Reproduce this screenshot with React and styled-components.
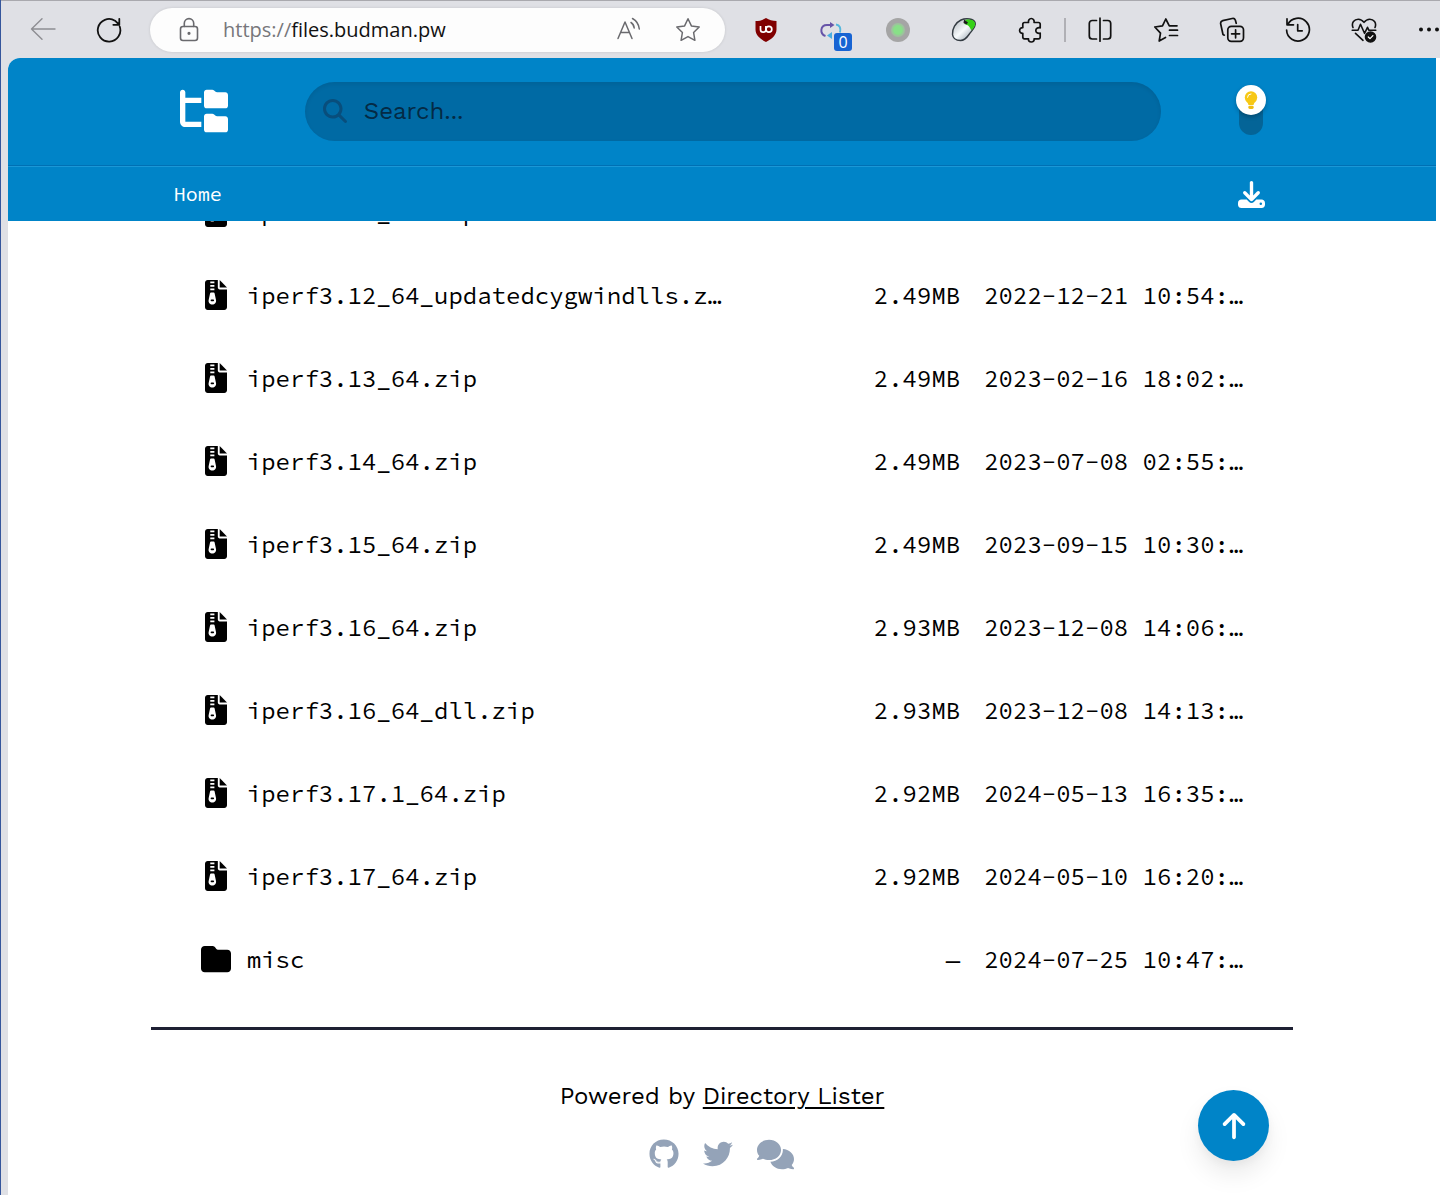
import React, { useState } from "react";
import styled, { createGlobalStyle } from "styled-components";
import {
  FaFolderTree,
  FaMagnifyingGlass,
  FaDownload,
  FaFolder,
  FaGithub,
  FaTwitter,
  FaComments,
  FaArrowUp,
} from "react-icons/fa6";

const sans = `"Work Sans", Inter, "Liberation Sans", sans-serif`;
const mono = `"Source Code Pro", "Liberation Mono", monospace`;
const blue = "#0084c8";
const deepBlue = "#006aa4";

const GlobalStyle = createGlobalStyle`
  *, *::before, *::after { box-sizing: border-box; }
  body { margin: 0; background: #dfe0e5; color: #000; font-family: ${sans}; }
  button, input { font: inherit; color: inherit; }
  button { border: 0; padding: 0; background: none; cursor: pointer; }
  a { color: inherit; text-decoration: none; }
  svg { display: block; flex: none; }
`;

/* ---------- browser window ---------- */

const Window = styled.div`
  display: flex;
  flex-direction: column;
  min-height: 100vh;
  border-left: 1px solid #35569c;
  background: #dfe0e5;
  overflow: hidden;
`;

const Toolbar = styled.div`
  display: flex;
  align-items: center;
  height: 58px;
  padding-left: 9px;
  border-top: 1px solid #a9a9ae;
  overflow: hidden;
`;

const ToolButton = styled.button`
  position: relative;
  display: flex;
  flex: 0 0 ${(p) => (p.$edge ? "43px" : "66px")};
  align-items: center;
  justify-content: ${(p) => (p.$edge ? "flex-start" : "center")};
  min-width: 0;
  height: 44px;
  padding-left: ${(p) => (p.$edge ? "20px" : "0")};
  color: ${(p) => (p.$muted ? "#8d8d92" : "#111")};
`;

const Address = styled.div`
  display: flex;
  flex: 1 1 0;
  align-items: center;
  min-width: 200px;
  height: 44px;
  margin: 0 8px;
  padding: 0 24px 0 26px;
  border-radius: 22px;
  background: #fdfdfd;
  box-shadow: 0 0 3px rgba(0, 0, 0, 0.12);
  color: #6a6a6e;
`;

const Url = styled.a`
  flex: 1;
  margin-left: 21px;
  font-family: "Segoe UI", "Open Sans", "Noto Sans", sans-serif;
  font-size: 20px;
  line-height: 28px;
  color: #77777b;
`;

const Host = styled.span`
  color: #111;
`;

const AddressButton = styled.button`
  margin-left: 33px;
`;

const Badge = styled.span`
  position: absolute;
  right: 13px;
  bottom: 1px;
  width: 18px;
  height: 18px;
  border-radius: 3px;
  background: #1764d3;
  color: #fff;
  font-family: "Open Sans", sans-serif;
  font-size: 16px;
  line-height: 18px;
  text-align: center;
`;

const Separator = styled.span`
  flex: 0 0 2px;
  height: 24px;
  margin: 0 1px;
  background: #b0b0b5;
`;

/* ---------- page ---------- */

const Page = styled.div`
  flex: 1;
  margin-left: 7px;
  padding-right: 4px;
  border-top-left-radius: 12px;
  background: #fff;
  overflow: hidden;
`;

const Container = styled.div`
  position: relative;
  width: 80%;
  margin: 0 auto;
`;

const Header = styled.header`
  position: relative;
  z-index: 1;
  background: ${blue};
  color: #fff;
`;

const HeaderBand = styled.div`
  border-bottom: 1px solid #0070b4;
`;

const PathBand = styled.div`
  border-top: 1px solid #1b97d6;
`;

const HeaderRow = styled(Container)`
  display: flex;
  align-items: center;
  gap: 75px;
  height: 107px;
  padding: 0 27px 1px 29px;
`;

const PathRow = styled(Container)`
  display: flex;
  align-items: center;
  justify-content: space-between;
  height: 54px;
  padding: 0 28px 0 23px;
`;

const LogoLink = styled.a`
  width: 50px;
`;

const SearchBox = styled.label`
  display: flex;
  flex: 1;
  align-items: center;
  gap: 17px;
  height: 59px;
  padding: 0 18px;
  border-radius: 30px;
  background: ${deepBlue};
  box-shadow: inset 0 2px 4px rgba(0, 0, 0, 0.08);
  color: #084e7c;
`;

const SearchInput = styled.input`
  flex: 1;
  min-width: 0;
  padding: 0;
  border: 0;
  outline: 0;
  background: transparent;
  font-size: 24px;
  line-height: 36px;
  &::placeholder {
    color: #042a45;
    opacity: 1;
  }
`;

const ThemeSwitch = styled.button`
  width: 30px;
  padding-bottom: 2px;
`;

const Track = styled.span`
  display: flex;
  flex-direction: column;
  align-items: center;
  justify-content: ${(p) => (p.$dark ? "flex-end" : "flex-start")};
  width: 24px;
  height: 50px;
  margin: 0 auto;
  border-radius: 12px;
  background: #046497;
`;

const Knob = styled.span`
  display: flex;
  flex: none;
  align-items: center;
  justify-content: center;
  width: 30px;
  height: 30px;
  border-radius: 50%;
  background: #fff;
  box-shadow: 0 2px 4px rgba(0, 0, 0, 0.25);
`;

const Crumb = styled.a`
  font-family: ${mono};
  font-size: 20px;
  line-height: 28px;
`;

/* ---------- listing ---------- */

const Listing = styled.main`
  margin-top: -50px;
  padding: 0 49px 0 47px;
`;

const FileTable = styled.table`
  width: 100%;
  border-spacing: 0;
  table-layout: fixed;
  font-family: ${mono};
  font-size: 24px;
  line-height: 35px;
`;

const Cell = styled.td`
  width: ${(p) => p.$width || "auto"};
  padding: 24px 0;
  text-align: ${(p) => p.$align || "left"};
  white-space: nowrap;
`;

const FileLink = styled.a`
  display: flex;
  align-items: center;
  gap: 13px;
`;

const IconSlot = styled.span`
  display: flex;
  flex: 0 0 36px;
  justify-content: center;
  padding-bottom: 2px;
`;

/* ---------- footer ---------- */

const Footer = styled.footer`
  display: flex;
  flex-direction: column;
  align-items: center;
  gap: 25px;
  margin-top: 26px;
  padding: 48px 0 26px;
  border-top: 3px solid #1e2033;
`;

const Credit = styled.p`
  margin: 0;
  font-size: 24px;
  line-height: 36px;
`;

const CreditLink = styled.a`
  text-decoration: underline;
  text-decoration-thickness: 2px;
  text-underline-offset: 3px;
`;

const Social = styled.nav`
  display: flex;
  align-items: center;
  gap: 24px;
  height: 30px;
  color: #94a3b8;
`;

const ToTop = styled.button`
  position: absolute;
  right: 24px;
  bottom: 34px;
  display: flex;
  align-items: center;
  justify-content: center;
  width: 71px;
  height: 71px;
  border-radius: 50%;
  background: ${blue};
  color: #fff;
  box-shadow: 0 14px 24px rgba(0, 0, 0, 0.08), 0 4px 8px rgba(0, 0, 0, 0.04);
`;

/* ---------- toolbar drawings ---------- */

const Line = ({ children, w = 1.5 }) => (
  <svg
    width="26"
    height="26"
    viewBox="0 0 26 26"
    fill="none"
    stroke="currentColor"
    strokeWidth={w}
    strokeLinecap="round"
    strokeLinejoin="round"
    aria-hidden="true"
  >
    {children}
  </svg>
);

const BackIcon = () => (
  <Line w={1.4}>
    <path d="M25 12H1.5M12 1.8 1.5 12 12 22.2" />
  </Line>
);

const ReloadIcon = () => (
  <Line w={1.8}>
    <path d="M23.7 9.5A11.3 11.3 0 1 1 19 3.700L23 7.500M23.300 1.800v6h-6" />
  </Line>
);

const LockIcon = () => (
  <Line w={1.6}>
    <rect x="4.5" y="9.5" width="17" height="14" rx="2.5" />
    <path d="M8.3 9.5V6.3a4.7 4.7 0 0 1 9.4 0v3.2" />
    <circle cx="13" cy="16.3" r="0.8" fill="currentColor" />
  </Line>
);

const ReadIcon = () => (
  <Line>
    <path d="M2 21.5 9 5l7 16.5M4.6 15.5h8.8M15 5.5c2 1.3 3 3 3.2 5.5M16.5 1.5c4 2.3 6.3 5.5 6.8 10.5" />
  </Line>
);

const StarIcon = () => (
  <Line>
    <path d="m13 1.8 3.4 7.1 7.8 1.1-5.6 5.5 1.3 7.8-6.9-3.7-6.9 3.7 1.3-7.8L1.8 10l7.8-1.1z" />
  </Line>
);

const ShieldIcon = () => (
  <svg width="26" height="26" viewBox="0 0 26 26" aria-hidden="true">
    <path d="M13 1c3 2 6.5 3 10.500 3v8.500c0 5.500-4.500 9.500-10.500 12.500C7 22 2.500 18 2.500 12.500V4C6.500 4 10 3 13 1z" fill="#800000" />
    <path d="M7.500 9v3.500a2.700 2.700 0 0 0 5.400 0V9" fill="none" stroke="#fff" strokeWidth="1.700" />
    <circle cx="15.900" cy="12.200" r="2.900" fill="none" stroke="#fff" strokeWidth="1.700" />
  </svg>
);

const SwapIcon = () => (
  <svg width="26" height="26" viewBox="0 0 26 26" fill="none" strokeWidth="2" aria-hidden="true">
    <path d="M6.500 19C.5 17 1 8 8 8h4" stroke="#6754a8" />
    <path d="m11 5 4.500 3-4.500 3z" fill="#6754a8" />
    <path d="M17 7.500c4 .5 5 4 4 8" stroke="#55b8dd" />
    <path d="m13 15-5 3.500 5 3.500z" fill="#4aaee0" />
  </svg>
);

const DotIcon = () => (
  <svg width="26" height="26" viewBox="0 0 26 26" aria-hidden="true">
    <circle cx="13" cy="13" r="12" fill="#a5a5a5" />
    <circle cx="13" cy="13" r="7" fill="#9cc49c" />
    <circle cx="13" cy="13" r="5" fill="#88e088" />
  </svg>
);

const MouseIcon = () => (
  <svg width="26" height="26" viewBox="0 0 26 26" aria-hidden="true">
    <defs>
      <linearGradient id="shell" x1="0" y1="0" x2="1" y2="1">
        <stop offset="0" stopColor="#aab1b8" />
        <stop offset="0.5" stopColor="#f7fafc" />
        <stop offset="1" stopColor="#7f8f9d" />
      </linearGradient>
    </defs>
    <path d="M1.500 17.500C1 12 4.500 5.500 10 3c5-2.200 13-1.500 14.200 3 1 4-3.500 7.500-6.200 11.500-2 3-4 6-8.500 6S2 21.500 1.500 17.500z" fill="url(#shell)" stroke="#333b42" strokeWidth="1.400" />
    <path d="M14.500 3c4-1 8.700-.2 9.500 3 .7 2.800-1.500 5-3.700 7.500C19 10 17.500 8 13.500 7z" fill="#35d117" />
    <path d="M13 2.500 17 5.500l-1.500 2-3-1.500z" fill="#1c1c1c" />
  </svg>
);

const PuzzleIcon = () => (
  <Line w={1.7}>
    <path d="M7.500 5.500h4c-.4-2.300.8-4 2.800-4s3.200 1.700 2.800 4h4.400c1 0 1.700.7 1.700 1.700v3.600c-2.700-.4-4.400.7-4.400 2.700s1.700 3.100 4.400 2.700v3.900c0 1-.7 1.700-1.700 1.700h-4.400c.3 2-.8 3.200-2.800 3.200s-3.100-1.200-2.800-3.200h-4c-1 0-1.700-.7-1.700-1.700v-3.800C3.900 16.500 2.600 15.200 2.600 13.500s1.300-3 3.200-2.800V7.200c0-1 .7-1.700 1.700-1.700z" />
  </Line>
);

const SplitIcon = () => (
  <Line w={1.7}>
    <path d="M9.500 3.500H5.300a3 3 0 0 0-3 3v12.500a3 3 0 0 0 3 3h4.200M16.500 3.500h4.200a3 3 0 0 1 3 3v12.500a3 3 0 0 1-3 3h-4.200M13 1.200v23" />
  </Line>
);

const FavoritesIcon = () => (
  <Line w={1.7}>
    <path d="M12.500 20.500 6.200 24l1.300-7.800L1.800 10l7.700-1.200L12.800 2l3.500 6.800H24M16.500 13.200H24.500M16.500 18.500H24.500" />
  </Line>
);

const CollectionsIcon = () => (
  <Line w={1.7}>
    <rect x="8.800" y="9.300" width="15.700" height="15" rx="3.500" />
    <path d="M16.600 12.800v8M12.600 16.800h8M5.300 18.200 4 17.500 1.700 7C1.300 5 2.200 4 3.700 3.600l9.500-2.100c1.700-.4 2.700.4 3.200 1.800l.8 3" />
  </Line>
);

const HistoryIcon = () => (
  <Line w={1.7}>
    <path d="M2 1.800v6h6.500M2.800 7.500A11.400 11.400 0 1 1 1.600 13M12.700 7.500v6.300h4.500" />
  </Line>
);

const HealthIcon = () => (
  <Line w={1.6}>
    <path d="M2 10.500C0 5.500 3.500 2.200 7.200 2.200c2.600 0 4.500 1.400 5.800 3.200 1.300-1.800 3.200-3.200 5.800-3.200 3.700 0 7.200 3.300 5.200 8.300M1.200 13.300H7l2.500-6 4 9 3-6 1.500 3h6.800M4.500 16.300l7.500 7" />
    <circle cx="19.500" cy="20" r="5" fill="currentColor" />
    <path d="m17.300 20 1.700 1.600 2.900-3" stroke="#fff" strokeWidth="1.300" />
  </Line>
);

const MoreIcon = () => (
  <svg width="26" height="26" viewBox="0 0 26 26" fill="currentColor" aria-hidden="true">
    <circle cx="4" cy="12.500" r="2" />
    <circle cx="12" cy="12.500" r="2" />
    <circle cx="20" cy="12.500" r="2" />
  </svg>
);

/* ---------- page drawings ---------- */

const BulbIcon = () => (
  <svg width="14" height="19" viewBox="0 0 14 19" aria-hidden="true">
    <circle cx="7" cy="6.500" r="6.200" fill="#f7c816" />
    <path d="M3 10h8l-1.500 4h-5z" fill="#f7c816" />
    <rect x="4.300" y="14.800" width="5.400" height="3.200" rx="1.400" fill="#f0bd12" />
    <path d="M3.500 6.300A3.500 3.500 0 0 1 7 2.900" fill="none" stroke="#fff" strokeWidth="1" strokeLinecap="round" />
  </svg>
);

const ZipIcon = () => (
  <svg width="22" height="30" viewBox="0 0 384 512" preserveAspectRatio="none" aria-hidden="true">
    <path d="M48 0h176v128c0 18 14 32 32 32h128v304c0 26-22 48-48 48H48c-26 0-48-22-48-48V48C0 22 22 0 48 0z" />
    <path d="M256 0v128h128z" />
    <path
      d="M92 24h72v32H92zM92 84h72v32H92zM92 144h72v32H92zM104 212h48c8 0 13 4 15 12l25 118c10 42-22 78-64 78s-74-36-64-78l25-118c2-8 7-12 15-12z"
      fill="#fff"
    />
    <rect x="98" y="334" width="60" height="28" rx="14" />
  </svg>
);

/* ---------- data ---------- */

const files = [
  ["iperf3.12_64.zip", "2.49MB", "2022-09-16 14:21:…"],
  ["iperf3.12_64_updatedcygwindlls.z…", "2.49MB", "2022-12-21 10:54:…"],
  ["iperf3.13_64.zip", "2.49MB", "2023-02-16 18:02:…"],
  ["iperf3.14_64.zip", "2.49MB", "2023-07-08 02:55:…"],
  ["iperf3.15_64.zip", "2.49MB", "2023-09-15 10:30:…"],
  ["iperf3.16_64.zip", "2.93MB", "2023-12-08 14:06:…"],
  ["iperf3.16_64_dll.zip", "2.93MB", "2023-12-08 14:13:…"],
  ["iperf3.17.1_64.zip", "2.92MB", "2024-05-13 16:35:…"],
  ["iperf3.17_64.zip", "2.92MB", "2024-05-10 16:20:…"],
  ["misc", "—", "2024-07-25 10:47:…", true],
];

const extensions = [
  ["uBlock", ShieldIcon],
  ["Redirects", SwapIcon, "0"],
  ["Status", DotIcon],
  ["Mouse", MouseIcon],
  ["Extensions", PuzzleIcon],
];

const browserTools = [
  ["Split screen", SplitIcon],
  ["Favorites", FavoritesIcon],
  ["Collections", CollectionsIcon],
  ["History", HistoryIcon],
  ["Browser essentials", HealthIcon],
];

function BrowserBar() {
  return (
    <Toolbar>
      <ToolButton $muted aria-label="Back"><BackIcon /></ToolButton>
      <ToolButton aria-label="Reload"><ReloadIcon /></ToolButton>
      <Address>
        <LockIcon />
        <Url href="#top">https://<Host>files.budman.pw</Host></Url>
        <AddressButton aria-label="Read aloud"><ReadIcon /></AddressButton>
        <AddressButton aria-label="Add to favorites"><StarIcon /></AddressButton>
      </Address>
      {extensions.map(([label, Icon, count]) => (
        <ToolButton key={label} aria-label={label}>
          <Icon />
          {count && <Badge>{count}</Badge>}
        </ToolButton>
      ))}
      <Separator />
      {browserTools.map(([label, Icon]) => (
        <ToolButton key={label} aria-label={label}><Icon /></ToolButton>
      ))}
      <ToolButton $edge aria-label="Settings and more"><MoreIcon /></ToolButton>
    </Toolbar>
  );
}

function FileRow({ name, size, date, folder }) {
  return (
    <tr>
      <Cell>
        <FileLink href={"#" + name}>
          <IconSlot>{folder ? <FaFolder size={30} /> : <ZipIcon />}</IconSlot>
          {name}
        </FileLink>
      </Cell>
      <Cell $width="120px" $align="right">{size}</Cell>
      <Cell $width="24px" />
      <Cell $width="260px">{date}</Cell>
    </tr>
  );
}

export default function App() {
  const [dark, setDark] = useState(false);
  return (
    <Window id="top">
      <GlobalStyle />
      <BrowserBar />
      <Page>
        <Header>
          <HeaderBand>
            <HeaderRow>
              <LogoLink href="#top" aria-label="Directory home">
                <FaFolderTree size={48} />
              </LogoLink>
              <SearchBox>
                <FaMagnifyingGlass size={24} />
                <SearchInput type="text" placeholder="Search..." aria-label="Search" />
              </SearchBox>
              <ThemeSwitch
                role="switch"
                aria-checked={dark}
                aria-label="Dark theme"
                onClick={() => setDark(!dark)}
              >
                <Track $dark={dark}>
                  <Knob><BulbIcon /></Knob>
                </Track>
              </ThemeSwitch>
            </HeaderRow>
          </HeaderBand>
          <PathBand>
            <PathRow>
              <Crumb href="#top">Home</Crumb>
              <a href="#download" aria-label="Download this folder"><FaDownload size={27} /></a>
            </PathRow>
          </PathBand>
        </Header>
        <Container>
          <Listing>
            <FileTable>
              <tbody>
                {files.map(([name, size, date, folder]) => (
                  <FileRow key={name} name={name} size={size} date={date} folder={folder} />
                ))}
              </tbody>
            </FileTable>
          </Listing>
          <Footer>
            <Credit>
              Powered by <CreditLink href="#lister">Directory Lister</CreditLink>
            </Credit>
            <Social aria-label="Project links">
              <a href="#github" aria-label="GitHub"><FaGithub size={30} /></a>
              <a href="#twitter" aria-label="Twitter"><FaTwitter size={30} /></a>
              <a href="#chat" aria-label="Chat"><FaComments size={37} /></a>
            </Social>
          </Footer>
          <ToTop aria-label="Back to top"><FaArrowUp size={30} /></ToTop>
        </Container>
      </Page>
    </Window>
  );
}
